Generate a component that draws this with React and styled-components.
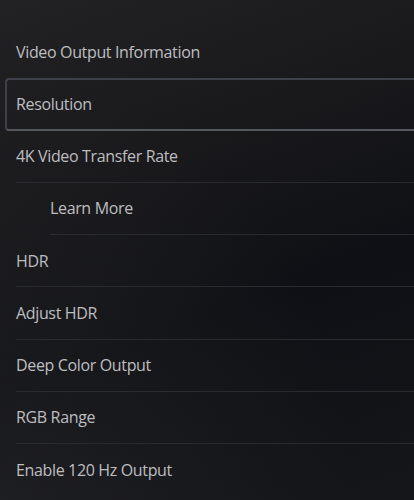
import React from 'react';
import styled, { createGlobalStyle } from 'styled-components';

const GlobalStyle = createGlobalStyle`
    html, body {
        margin: 0;
        padding: 0;
        background: #141519;
    }
`

const Screen = styled.div`
    width: 414px;
    height: 500px;
    overflow: hidden;
    background:
        radial-gradient(ellipse at 0% 100%, rgba(40,40,42,0.55), rgba(40,40,42,0) 60%),
        linear-gradient(160deg, #222224 0%, #18181b 35%, #0f1015 60%, #15161a 100%);
    font-family: 'Open Sans', 'Noto Sans', sans-serif;
    padding-top: 26px;
    box-sizing: border-box;
`

const List = styled.div`
    display: flex;
    flex-direction: column;
`

const Row = styled.div`
    height: 52.25px;
    box-sizing: border-box;
    display: flex;
    align-items: center;
    margin-left: ${props => props.indent}px;
    margin-right: -4px;
    color: #bebec0;
    font-size: 16px;
    letter-spacing: -0.35px;
    border-bottom: 1px solid ${props => props.divider ? '#2a2b30' : 'transparent'};
`

const Selected = styled(Row)`
    margin-left: 5px;
    padding-left: 9px;
    border: 2px solid #3e4149;
    border-bottom-color: #54575e;
    border-right: none;
    border-radius: 4px 0 0 4px;
`

const items = [
    { label: 'Video Output Information', indent: 16, divider: false },
    { label: 'Resolution', selected: true },
    { label: '4K Video Transfer Rate', indent: 16, divider: true },
    { label: 'Learn More', indent: 50, divider: true },
    { label: 'HDR', indent: 16, divider: true },
    { label: 'Adjust HDR', indent: 16, divider: true },
    { label: 'Deep Color Output', indent: 16, divider: true },
    { label: 'RGB Range', indent: 16, divider: true },
    { label: 'Enable 120 Hz Output', indent: 16, divider: false },
]

export default () => {
    return (
        <>
            <GlobalStyle />
            <Screen>
                <List>
                    {items.map(item => item.selected
                        ? <Selected key={item.label}>{item.label}</Selected>
                        : <Row key={item.label} indent={item.indent} divider={item.divider}>{item.label}</Row>
                    )}
                </List>
            </Screen>
        </>
    )
}
